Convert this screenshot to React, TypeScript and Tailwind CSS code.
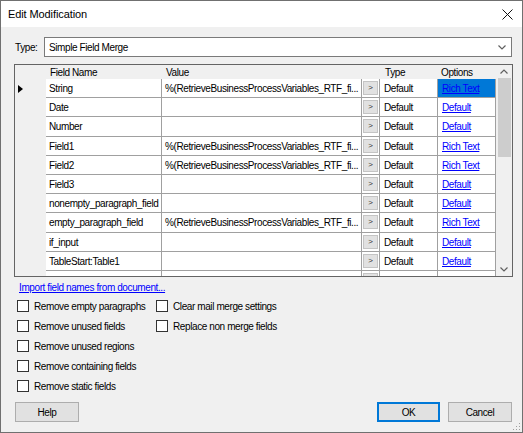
import React from "react";

const VALUE = "%(RetrieveBusinessProcessVariables_RTF_fi...";

type Row = { name: string; value: string; option: string };

const rows: Row[] = [
  { name: "String", value: VALUE, option: "Rich Text" },
  { name: "Date", value: "", option: "Default" },
  { name: "Number", value: "", option: "Default" },
  { name: "Field1", value: VALUE, option: "Rich Text" },
  { name: "Field2", value: VALUE, option: "Rich Text" },
  { name: "Field3", value: "", option: "Default" },
  { name: "nonempty_paragraph_field", value: "", option: "Default" },
  { name: "empty_paragraph_field", value: VALUE, option: "Rich Text" },
  { name: "if_input", value: "", option: "Default" },
  { name: "TableStart:Table1", value: "", option: "Default" },
  { name: "TableEnd:Table1", value: "", option: "Default" },
];

function Chevron({ up }: { up?: boolean }) {
  return (
    <svg width="8" height="5" viewBox="0 0 8 5" className="block">
      <path
        d={up ? "M0.5 4.5 L4 1 L7.5 4.5" : "M0.5 0.5 L4 4 L7.5 0.5"}
        fill="none"
        stroke="#606060"
        strokeWidth="1.2"
      />
    </svg>
  );
}

function Checkbox({ label }: { label: string }) {
  return (
    <div className="flex items-center h-[20px]">
      <div className="w-[12px] h-[12px] bg-white border border-[#333]" />
      <span className="ml-[5px]">{label}</span>
    </div>
  );
}

function GridRow({ row, index }: { row: Row; index: number }) {
  const selected = index === 0;
  return (
    <div className="flex h-[19.2px] shrink-0">
      <div className="w-[31px] flex items-center pl-[3px]">
        {selected && (
          <svg width="5" height="8" viewBox="0 0 5 8">
            <path d="M0 0 L5 4 L0 8 Z" fill="#000" />
          </svg>
        )}
      </div>
      <div className="w-[116px] bg-white border-r border-b border-[#a0a0a0] pl-[3px] pt-[1px] flex items-center whitespace-nowrap overflow-hidden">
        {row.name}
      </div>
      <div className="w-[200px] bg-white border-r border-b border-[#a0a0a0] pl-[3px] pt-[1px] flex items-center whitespace-nowrap overflow-hidden">
        {row.value}
      </div>
      <div className="w-[18px] bg-white border-r border-b border-[#a0a0a0] flex items-center justify-center">
        <div className="w-[15px] h-[14px] bg-[#e1e1e1] border border-[#c4c4c4] flex items-center justify-center text-[8px] text-[#333]">
          &gt;
        </div>
      </div>
      <div className="w-[58px] bg-white border-r border-b border-[#a0a0a0] pl-[4px] pt-[1px] flex items-center">
        Default
      </div>
      <div
        className={`w-[58px] border-r border-b border-[#a0a0a0] pl-[4px] pt-[1px] flex items-center ${
          selected ? "bg-[#0078d7]" : "bg-white"
        }`}
      >
        <span className="underline text-[#0000ff]">{row.option}</span>
      </div>
    </div>
  );
}

export default function App() {
  return (
    <div
      className="w-[523px] h-[433px] border border-[#707070] flex flex-col text-[10px] tracking-[-0.4px] text-black overflow-hidden"
      style={{ fontFamily: '"Liberation Sans", Arial, sans-serif' }}
    >
      {/* Title bar */}
      <div className="h-[26px] bg-white flex items-center justify-between pl-[7px] pr-[9px] shrink-0">
        <span className="text-[11px] tracking-[-0.1px]">Edit Modification</span>
        <svg width="11" height="11" viewBox="0 0 11 11">
          <path d="M0.5 0.5 L10.5 10.5 M10.5 0.5 L0.5 10.5" stroke="#111" strokeWidth="1" />
        </svg>
      </div>

      {/* Body */}
      <div className="flex-1 bg-[#f0f0f0] relative flex flex-col">
        {/* Type */}
        <div className="flex items-center mt-[10px] ml-[14px] mr-[10px]">
          <span className="w-[29px]">Type:</span>
          <div className="flex-1 h-[20px] bg-white border border-[#7a7a7a] flex items-center justify-between pl-[4px] pr-[5px]">
            <span>Simple Field Merge</span>
            <Chevron />
          </div>
        </div>

        {/* Grid */}
        <div className="mt-[7px] ml-[13px] w-[499px] h-[213px] border border-[#646464] bg-[#f0f0f0] flex overflow-hidden">
          <div className="flex-1 flex flex-col overflow-hidden">
            <div className="flex h-[14px] shrink-0 items-center">
              <div className="w-[31px]" />
              <div className="w-[116px] pl-[4px]">Field Name</div>
              <div className="w-[218px] pl-[4px]">Value</div>
              <div className="w-[58px] pl-[5px]">Type</div>
              <div className="w-[58px] pl-[3px]">Options</div>
            </div>
            {rows.map((r, i) => (
              <GridRow key={r.name} row={r} index={i} />
            ))}
          </div>
          {/* Scrollbar */}
          <div className="w-[16px] bg-[#f0f0f0] flex flex-col items-center">
            <div className="h-[13px] flex items-center justify-center">
              <Chevron up />
            </div>
            <div className="w-[13px] h-[79px] bg-[#cdcdcd]" />
            <div className="flex-1" />
            <div className="h-[14px] flex items-center justify-center">
              <Chevron />
            </div>
          </div>
        </div>

        {/* Link */}
        <div className="mt-[4px] ml-[18px] h-[12px] flex items-center">
          <span className="underline text-[#0000ff]">Import field names from document...</span>
        </div>

        {/* Options */}
        <div className="flex mt-[3px] ml-[16px]">
          <div className="w-[139px] flex flex-col">
            <Checkbox label="Remove empty paragraphs" />
            <Checkbox label="Remove unused fields" />
            <Checkbox label="Remove unused regions" />
            <Checkbox label="Remove containing fields" />
            <Checkbox label="Remove static fields" />
          </div>
          <div className="flex flex-col">
            <Checkbox label="Clear mail merge settings" />
            <Checkbox label="Replace non merge fields" />
          </div>
        </div>

        {/* Buttons */}
        <div className="mt-auto mb-[10px] ml-[14px] mr-[10px] flex items-center">
          <div className="w-[64px] h-[20px] bg-[#e1e1e1] border border-[#adadad] flex items-center justify-center">
            Help
          </div>
          <div className="flex-1" />
          <div className="w-[63px] h-[20px] bg-[#e1e1e1] border-2 border-[#0078d7] flex items-center justify-center">
            OK
          </div>
          <div className="w-[64px] h-[20px] ml-[8px] bg-[#e1e1e1] border border-[#adadad] flex items-center justify-center">
            Cancel
          </div>
        </div>

        {/* Size grip */}
        <svg width="8" height="8" viewBox="0 0 8 8" className="absolute right-[1px] bottom-[1px]">
          <rect x="6" y="0" width="1" height="1" fill="#a0a0a0" />
          <rect x="3" y="3" width="1" height="1" fill="#a0a0a0" />
          <rect x="6" y="3" width="1" height="1" fill="#a0a0a0" />
          <rect x="0" y="6" width="1" height="1" fill="#a0a0a0" />
          <rect x="3" y="6" width="1" height="1" fill="#a0a0a0" />
          <rect x="6" y="6" width="1" height="1" fill="#a0a0a0" />
        </svg>
      </div>
    </div>
  );
}
